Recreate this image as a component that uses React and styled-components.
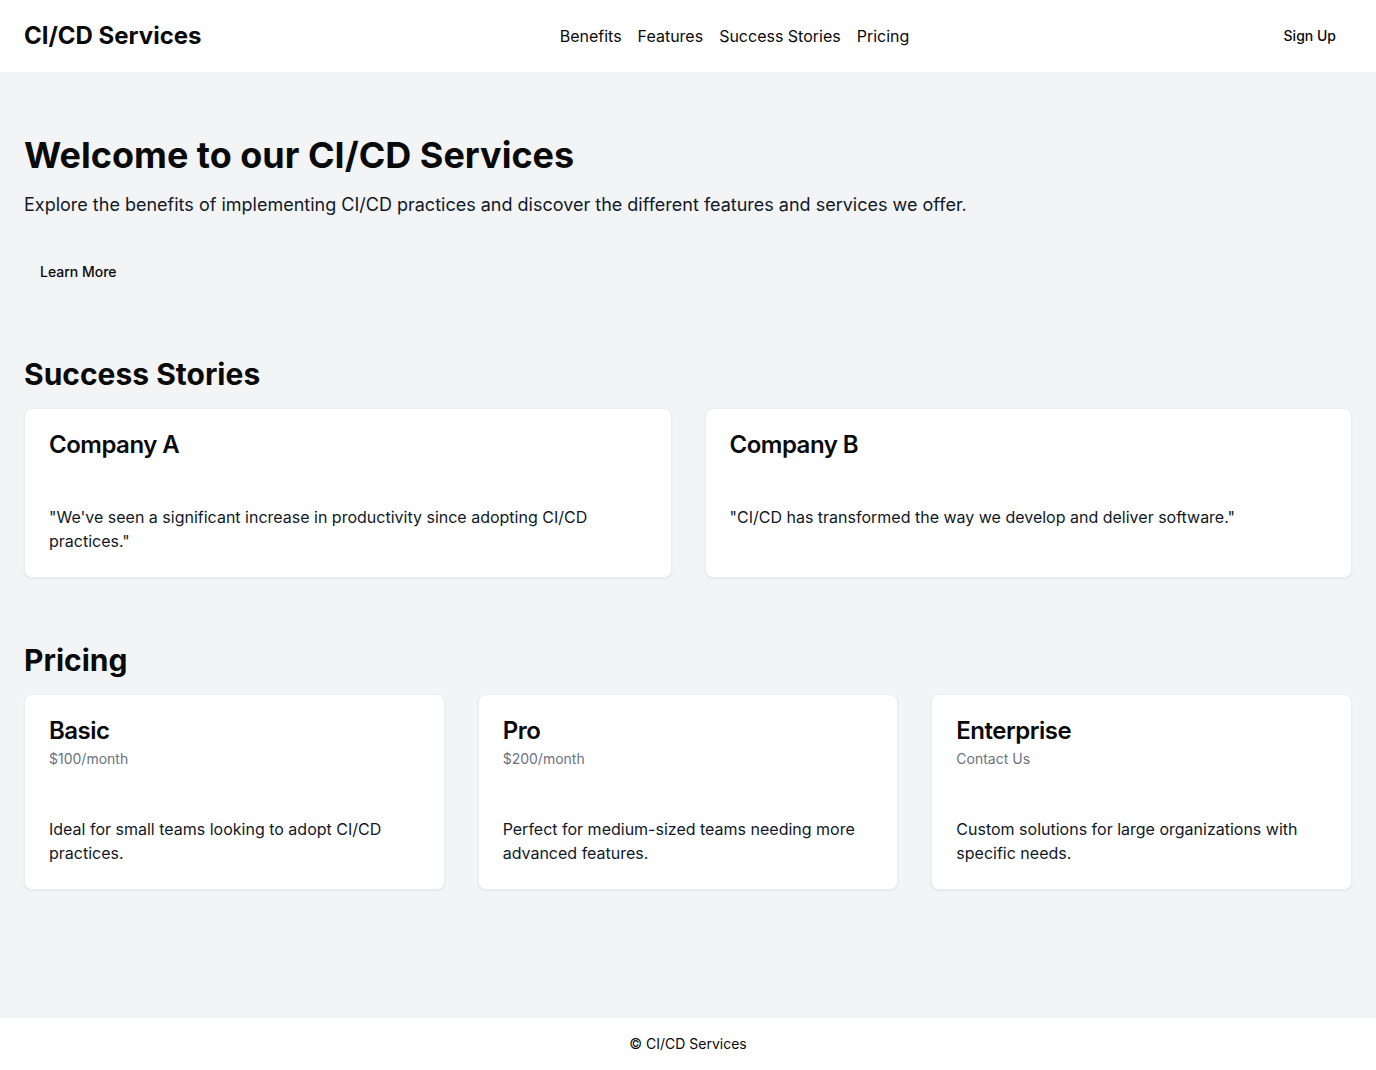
import React from "react";
import styled, { createGlobalStyle } from "styled-components";

const GlobalStyle = createGlobalStyle`
  * {
    box-sizing: border-box;
  }
  body {
    margin: 0;
    font-family: Inter, "Liberation Sans", sans-serif;
    color: #0a0a0a;
    background: #ffffff;
  }
  h1, h2, h3, p {
    margin: 0;
  }
`;

const Page = styled.div`
  min-height: 100vh;
  display: flex;
  flex-direction: column;
`;

const Header = styled.header`
  height: 72px;
  padding: 0 24px;
  display: flex;
  align-items: center;
  justify-content: space-between;
  background: #ffffff;
`;

const Brand = styled.div`
  font-size: 24px;
  line-height: 32px;
  font-weight: 700;
`;

const Nav = styled.nav`
  display: flex;
  gap: 16px;
`;

const NavLink = styled.a`
  font-size: 16px;
  line-height: 24px;
  color: #0a0a0a;
  text-decoration: none;
`;

const GhostButton = styled.button`
  height: 40px;
  padding: 0 16px 2px;
  border: none;
  border-radius: 6px;
  background: transparent;
  font-family: inherit;
  font-size: 14px;
  font-weight: 500;
  color: #0a0a0a;
  cursor: pointer;
`;

const Main = styled.main`
  flex: 1;
  background: #f3f4f6;
  padding: 64px 24px;
  display: flex;
  flex-direction: column;
  gap: 64px;
`;

const Hero = styled.section`
  display: flex;
  flex-direction: column;
  align-items: flex-start;
`;

const HeroTitle = styled.h1`
  font-size: 36px;
  line-height: 38px;
  padding-bottom: 2px;
  font-weight: 700;
`;

const HeroText = styled.p`
  margin-top: 15px;
  font-size: 18px;
  line-height: 28px;
  padding-bottom: 1px;
  color: #111827;
`;

const HeroAction = styled.div`
  margin-top: 32px;
`;

const Section = styled.section`
  display: flex;
  flex-direction: column;
  gap: 16px;
`;

const SectionTitle = styled.h2`
  font-size: 30px;
  line-height: 36px;
  font-weight: 700;
`;

const Grid = styled.div`
  display: grid;
  grid-template-columns: repeat(${(p) => p.$cols}, 1fr);
  gap: 33px;
`;

const Card = styled.div`
  background: #ffffff;
  border: 1px solid #eceef1;
  border-radius: 8px;
  box-shadow: 0 1px 2px rgba(0, 0, 0, 0.06);
`;

const CardHeader = styled.div`
  padding: 24px;
  display: flex;
  flex-direction: column;
  gap: 6px;
`;

const CardTitle = styled.h3`
  font-size: 24px;
  line-height: 24px;
  font-weight: 600;
  letter-spacing: -0.5px;
`;

const CardDescription = styled.p`
  font-size: 14px;
  line-height: 20px;
  color: #6b7280;
`;

const CardContent = styled.div`
  padding: 24px;
  font-size: 16px;
  line-height: 24px;
  color: #111827;
`;

const Footer = styled.footer`
  padding: 16px 24px;
  text-align: center;
  font-size: 14px;
  line-height: 20px;
  background: #ffffff;
`;

const stories = [
  {
    name: "Company A",
    quote:
      "\"We've seen a significant increase in productivity since adopting CI/CD practices.\"",
  },
  {
    name: "Company B",
    quote: "\"CI/CD has transformed the way we develop and deliver software.\"",
  },
];

const plans = [
  {
    name: "Basic",
    price: "$100/month",
    text: "Ideal for small teams looking to adopt CI/CD practices.",
  },
  {
    name: "Pro",
    price: "$200/month",
    text: "Perfect for medium-sized teams needing more advanced features.",
  },
  {
    name: "Enterprise",
    price: "Contact Us",
    text: "Custom solutions for large organizations with specific needs.",
  },
];

const App = () => {
  return (
    <Page>
      <GlobalStyle />
      <Header>
        <Brand>CI/CD Services</Brand>
        <Nav>
          <NavLink href="#benefits">Benefits</NavLink>
          <NavLink href="#features">Features</NavLink>
          <NavLink href="#stories">Success Stories</NavLink>
          <NavLink href="#pricing">Pricing</NavLink>
        </Nav>
        <GhostButton>Sign Up</GhostButton>
      </Header>
      <Main>
        <Hero>
          <HeroTitle>Welcome to our CI/CD Services</HeroTitle>
          <HeroText>
            Explore the benefits of implementing CI/CD practices and discover
            the different features and services we offer.
          </HeroText>
          <HeroAction>
            <GhostButton>Learn More</GhostButton>
          </HeroAction>
        </Hero>
        <Section id="stories">
          <SectionTitle>Success Stories</SectionTitle>
          <Grid $cols={2}>
            {stories.map((s) => (
              <Card key={s.name}>
                <CardHeader>
                  <CardTitle>{s.name}</CardTitle>
                </CardHeader>
                <CardContent>{s.quote}</CardContent>
              </Card>
            ))}
          </Grid>
        </Section>
        <Section id="pricing">
          <SectionTitle>Pricing</SectionTitle>
          <Grid $cols={3}>
            {plans.map((p) => (
              <Card key={p.name}>
                <CardHeader>
                  <CardTitle>{p.name}</CardTitle>
                  <CardDescription>{p.price}</CardDescription>
                </CardHeader>
                <CardContent>{p.text}</CardContent>
              </Card>
            ))}
          </Grid>
        </Section>
      </Main>
      <Footer>© CI/CD Services</Footer>
    </Page>
  );
};

export default App;
